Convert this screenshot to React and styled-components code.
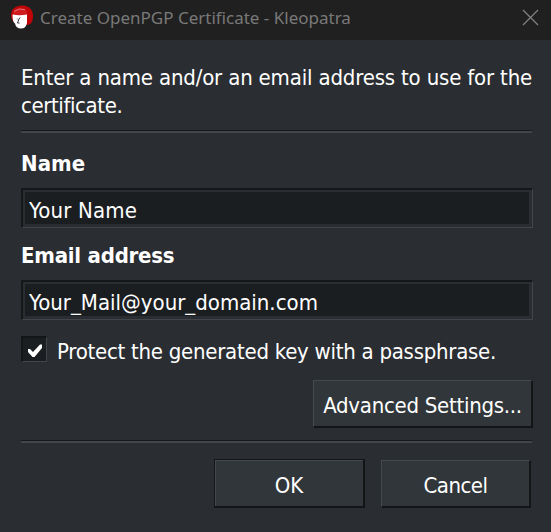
import React from "react";
import styled, { createGlobalStyle } from "styled-components";

const Global = createGlobalStyle`
  * { box-sizing: border-box; }
  html, body { margin: 0; background: #2a2d31; overflow: hidden; }
`;

const Dialog = styled.main`
  width: 551px;
  height: 532px;
  display: flex;
  flex-direction: column;
  background: #2a2d31;
  color: #fff;
  font-family: "DejaVu Sans Condensed", "DejaVu Sans", sans-serif;
  font-stretch: condensed;
  font-size: 22px;
  line-height: 28px;
  white-space: nowrap;
`;

const TitleBar = styled.header`
  height: 40px;
  flex: none;
  display: flex;
  align-items: flex-start;
  padding: 5px 12px 0 11px;
  background: #202020;
`;

const Title = styled.h1`
  flex: 1;
  margin: 1px 0 0 7px;
  font: 400 17px/24px "Noto Sans", sans-serif;
  color: #797979;
`;

const CloseButton = styled.button`
  width: 17px;
  height: 17px;
  margin-top: 4px;
  padding: 0;
  border: 0;
  background: none;
  display: flex;
`;

const Body = styled.form`
  flex: 1;
  display: flex;
  flex-direction: column;
  padding: 24px 18px 0 21px;
`;

const Intro = styled.p`
  margin: 0 0 10px;
`;

const Line = styled.span`
  display: block;
  letter-spacing: ${(p) => p.$spacing};
`;

const Separator = styled.hr`
  flex: none;
  width: 511px;
  height: 3px;
  margin: 0;
  border: 0;
  border-top: 1px solid #17191b;
  background: #42454b;
`;

const Label = styled.label`
  height: 28px;
  margin-top: ${(p) => p.$top};
  font-weight: 700;
  letter-spacing: ${(p) => p.$spacing};
`;

const Field = styled.div`
  width: 512px;
  height: 40px;
  margin-top: 10px;
  padding: 2px;
  border: 1px solid;
  border-width: 2px 1px 1px 2px;
  border-color: #151719 #42454a #42454a #151719;
`;

const Input = styled.input`
  display: block;
  width: 504px;
  height: 32px;
  padding: 4px 4px 0;
  border: 0;
  outline: 0;
  background: #1b1e21;
  color: #fff;
  font: inherit;
  letter-spacing: ${(p) => p.$spacing};
`;

const CheckRow = styled.label`
  display: flex;
  height: 28px;
  margin-top: 16px;
  gap: 10px;
`;

const CheckBox = styled.span`
  width: 26px;
  height: 26px;
  flex: none;
  border: 1px solid;
  border-width: 2px 1px 1px 2px;
  border-color: #131517 #42454a #42454a #131517;
  background: #1b1e21;
  svg { display: block; }
`;

const CheckText = styled.span`
  margin-top: 2px;
  letter-spacing: -0.26px;
`;

const Button = styled.button`
  width: ${(p) => p.$width};
  height: ${(p) => (p.$default ? "49px" : "48px")};
  padding: ${(p) => (p.$default ? "6px" : "4px")} 0 0;
  border: 1px solid;
  border-width: 1px 2px 2px 1px;
  border-color: ${(p) => (p.$default ? "#131517" : "#45494d #131517 #131517 #45494d")};
  box-shadow: ${(p) => (p.$default ? "inset 1px 1px #45494d" : "none")};
  background: #31363a;
  color: #fff;
  font: inherit;
  letter-spacing: ${(p) => p.$spacing};
`;

const AdvancedRow = styled.div`
  display: flex;
  justify-content: flex-end;
  margin-top: 16px;
  width: 512px;
  margin-bottom: 12px;
`;

const Actions = styled.footer`
  display: flex;
  justify-content: flex-end;
  align-items: flex-end;
  gap: 16px;
  width: 510px;
  margin-top: 16px;
`;

function Logo() {
  return (
    <svg width="22" height="24" viewBox="0 0 22 24">
      <path d="M11 0.5C18 0.5 22 5 22 11C22 16 20 20 16 20L4 18C1 16 0 13 0 10C0 4 5 0.5 11 0.5Z" fill="#c00408" />
      <path d="M2 9C3 3 10 2 16 6L16 10H2Z" fill="#d01c20" />
      <path d="M3 6.5Q8 2.5 14 4.5" fill="none" stroke="#e87779" />
      <path d="M1.5 9.5Q8 11 16 9.5V18Q15 23.5 10 23.5Q5 23.5 4 18.5Q1.5 17 1.5 9.5Z" fill="#fff" />
      <path d="M9 12.5L8 14L6.5 18H8.5" fill="none" stroke="#303040" />
      <path d="M5.5 14H7" stroke="#aaaab0" />
    </svg>
  );
}

export default function App() {
  return (
    <Dialog>
      <Global />
      <TitleBar>
        <Logo />
        <Title>Create OpenPGP Certificate - Kleopatra</Title>
        <CloseButton type="button" aria-label="Close">
          <svg width="17" height="17" viewBox="0 0 17 17">
            <path d="M1 1L16 16M16 1L1 16" stroke="#818181" strokeWidth="1.3" />
          </svg>
        </CloseButton>
      </TitleBar>
      <Body onSubmit={(e) => e.preventDefault()}>
        <Intro>
          <Line $spacing="-0.175px">Enter a name and/or an email address to use for the</Line>
          <Line $spacing="-0.4px">certificate.</Line>
        </Intro>
        <Separator />
        <Label htmlFor="name" $top="17px" $spacing="0.1px">Name</Label>
        <Field>
          <Input id="name" defaultValue="Your Name" $spacing="0.15px" />
        </Field>
        <Label htmlFor="email" $top="14px" $spacing="-0.23px">Email address</Label>
        <Field>
          <Input id="email" defaultValue="Your_Mail@your_domain.com" $spacing="0px" />
        </Field>
        <CheckRow>
          <CheckBox role="checkbox" aria-checked="true">
            <svg width="23" height="23" viewBox="0 0 23 23">
              <path d="M5 11H7L10 14L17 6.5H19V10L11.5 19H9.5L5 14Z" fill="#fff" />
            </svg>
          </CheckBox>
          <CheckText>Protect the generated key with a passphrase.</CheckText>
        </CheckRow>
        <AdvancedRow>
          <Button type="button" $width="220px" $spacing="-0.27px">Advanced Settings...</Button>
        </AdvancedRow>
        <Separator />
        <Actions>
          <Button type="submit" $default $width="151px" $spacing="0px">OK</Button>
          <Button type="button" $width="150px" $spacing="-0.5px">Cancel</Button>
        </Actions>
      </Body>
    </Dialog>
  );
}
